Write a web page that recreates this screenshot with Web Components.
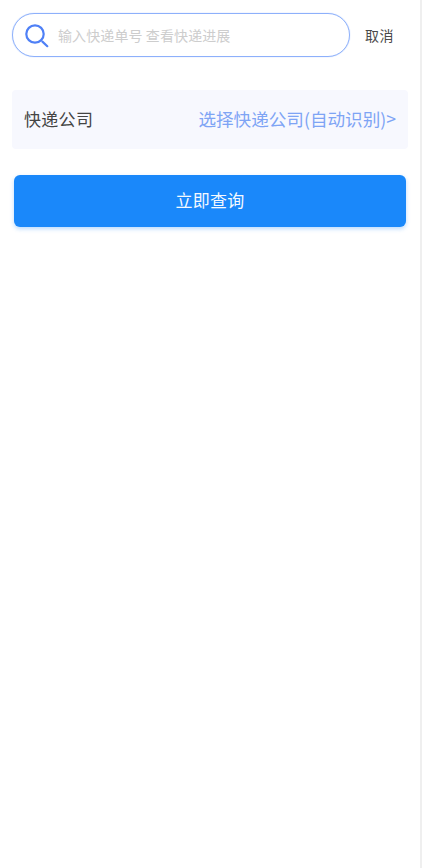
<!DOCTYPE html>
<html lang="zh">
<head>
<meta charset="utf-8">
<title>快递查询</title>
<style>
html, body {
    margin: 0;
    height: 100%;
    background: #fff;
}
body {
    font-family: "Noto Sans CJK SC", "Liberation Sans", sans-serif;
}
</style>
</head>
<body>
<express-page>
    <search-bar placeholder="输入快递单号 查看快递进展" cancel="取消"></search-bar>
    <picker-row label="快递公司" value="选择快递公司(自动识别)>"></picker-row>
    <primary-button>立即查询</primary-button>
</express-page>

<script>
class ExpressPage extends HTMLElement {
    constructor() {
        super();
        this.attachShadow({mode: 'open'});
        this.shadowRoot.innerHTML = `
<style>
:host {
    display: flex;
    flex-direction: column;
    box-sizing: border-box;
    width: 422px;
    height: 868px;
    padding: 13px 12px 0 12px;
    border-right: 2px solid #efefef;
}
</style>
<slot></slot>
`;
    }
}

class SearchBar extends HTMLElement {
    constructor() {
        super();
        this.attachShadow({mode: 'open'});
        this.shadowRoot.innerHTML = `
<style>
:host {
    display: flex;
    align-items: center;
    height: 44px;
}
.box {
    display: flex;
    align-items: center;
    box-sizing: border-box;
    width: 338px;
    height: 44px;
    padding-left: 12px;
    border: 1px solid #8db0fb;
    border-radius: 22px;
    box-shadow: 0 0 1px #8db0fb;
}
svg {
    display: block;
    width: 25px;
    height: 25px;
    flex: none;
}
.hint {
    margin-left: 8px;
    font-size: 14px;
    letter-spacing: 0.1px;
    color: #cdcdcd;
}
.cancel {
    margin-left: 15px;
    font-size: 14px;
    letter-spacing: 0.5px;
    color: #4a4a4a;
}
</style>
<div class="box">
    <svg viewBox="0 0 25 25" fill="none" stroke="#4f80f6" stroke-linecap="round">
        <circle cx="10" cy="11" r="8.7" stroke-width="2.2"/>
        <path d="M17.4 18.6 L22.3 23.2" stroke-width="2.2"/>
    </svg>
    <span class="hint"></span>
</div>
<span class="cancel"></span>
`;
    }

    connectedCallback() {
        this.shadowRoot.querySelector('.hint').textContent = this.getAttribute('placeholder');
        this.shadowRoot.querySelector('.cancel').textContent = this.getAttribute('cancel');
    }
}

class PickerRow extends HTMLElement {
    constructor() {
        super();
        this.attachShadow({mode: 'open'});
        this.shadowRoot.innerHTML = `
<style>
:host {
    display: flex;
    align-items: center;
    justify-content: space-between;
    box-sizing: border-box;
    height: 59px;
    margin-top: 33px;
    padding: 0 12px 2px 12px;
    border-radius: 4px;
    background: #f7f8fe;
    font-size: 17px;
}
.label {
    color: #444;
    letter-spacing: 0.3px;
}
.value {
    color: #7ea4f5;
    font-size: 17.6px;
}
</style>
<span class="label"></span>
<span class="value"></span>
`;
    }

    connectedCallback() {
        this.shadowRoot.querySelector('.label').textContent = this.getAttribute('label');
        this.shadowRoot.querySelector('.value').textContent = this.getAttribute('value');
    }
}

class PrimaryButton extends HTMLElement {
    constructor() {
        super();
        this.attachShadow({mode: 'open'});
        this.shadowRoot.innerHTML = `
<style>
:host {
    display: flex;
    align-items: center;
    justify-content: center;
    box-sizing: border-box;
    height: 52px;
    margin: 26px 2px 0;
    padding-bottom: 3px;
    border-radius: 6px;
    background: #1a88fa;
    box-shadow: 0 2px 4px rgba(26, 136, 250, 0.3);
    color: #f4f9ff;
    font-size: 17px;
    letter-spacing: 0.3px;
}
</style>
<slot></slot>
`;
    }
}

customElements.define('express-page', ExpressPage);
customElements.define('search-bar', SearchBar);
customElements.define('picker-row', PickerRow);
customElements.define('primary-button', PrimaryButton);
</script>
</body>
</html>
